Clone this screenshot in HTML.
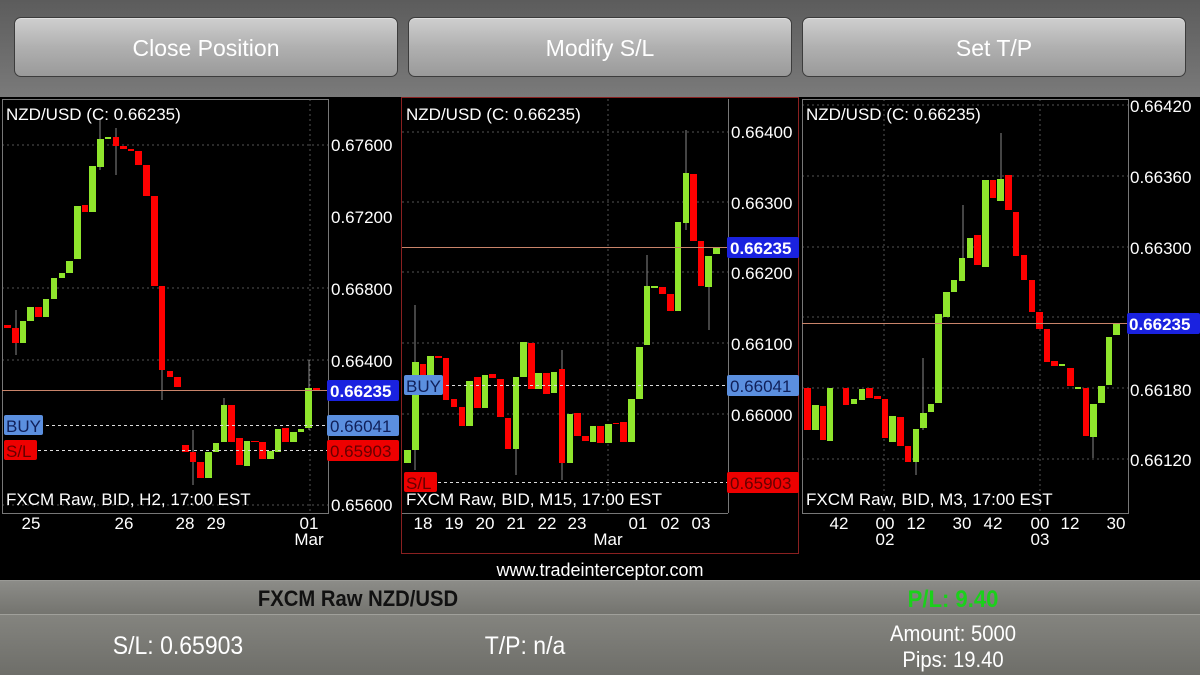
<!DOCTYPE html>
<html><head><meta charset="utf-8"><style>
*{margin:0;padding:0;box-sizing:border-box}
body{width:1200px;height:675px;overflow:hidden;background:#000;font-family:"Liberation Sans",sans-serif;position:relative}
.top{position:absolute;left:0;top:0;width:1200px;height:97px;background:linear-gradient(#5c5c5c,#7a7a7a)}
.btn{position:absolute;top:17px;height:60px;border:1px solid #3c3c3c;border-radius:7px;background:linear-gradient(#cfcfcf,#b0b0b0 50%,#9a9a9a);color:#fff;font-size:23px;text-align:center;line-height:60px;box-shadow:inset 0 1px 0 #e0e0e0}
.bar1{position:absolute;left:0;top:580px;width:1200px;height:34px;background:linear-gradient(#8c8c88,#74746f);border-top:1px solid #9a9a96}
.bar2{position:absolute;left:0;top:614px;width:1200px;height:61px;background:linear-gradient(#84847f,#6e6e69);border-top:1px solid #a0a09b}
.t{position:absolute;white-space:nowrap;transform-origin:center;transform:scaleX(.92)}
</style></head><body>
<div class="top"></div>
<div class="btn" style="left:14px;width:384px">Close Position</div>
<div class="btn" style="left:408px;width:384px">Modify S/L</div>
<div class="btn" style="left:802px;width:384px">Set T/P</div>

<svg style="position:absolute;left:0;top:97px" width="1200" height="483" viewBox="0 97 1200 483" font-family="Liberation Sans, sans-serif">
<g stroke="#555" stroke-dasharray="2,3" stroke-width="1">
<line x1="2" x2="328" y1="145" y2="145"/><line x1="2" x2="328" y1="288" y2="288"/><line x1="2" x2="328" y1="360" y2="360"/><line x1="2" x2="328" y1="505" y2="505"/><line x1="310" x2="310" y1="99" y2="513"/>
<line x1="402" x2="728" y1="132" y2="132"/><line x1="402" x2="728" y1="202" y2="202"/><line x1="402" x2="728" y1="272" y2="272"/><line x1="402" x2="728" y1="343" y2="343"/><line x1="402" x2="728" y1="414" y2="414"/><line x1="608" x2="608" y1="99" y2="513"/>
<line x1="802" x2="1128" y1="105" y2="105"/><line x1="802" x2="1128" y1="176" y2="176"/><line x1="802" x2="1128" y1="247" y2="247"/><line x1="802" x2="1128" y1="317" y2="317"/><line x1="802" x2="1128" y1="388" y2="388"/><line x1="802" x2="1128" y1="459" y2="459"/><line x1="884" x2="884" y1="99" y2="513"/><line x1="1040" x2="1040" y1="99" y2="513"/>
</g>
<g fill="none" stroke="#777"><rect x="2.5" y="99.5" width="326" height="414"/><rect x="802.5" y="99.5" width="326" height="414"/><line x1="728.5" x2="728.5" y1="99" y2="513"/><line x1="401" x2="728" y1="513.5" y2="513.5"/></g>
<rect x="401.5" y="97.5" width="397" height="456" fill="none" stroke="#8a2020"/>
<g stroke="#888" stroke-width="1">
<line x1="100" x2="100" y1="120" y2="170"/><line x1="116" x2="116" y1="128" y2="175"/><line x1="162" x2="162" y1="300" y2="400"/><line x1="193" x2="193" y1="430" y2="485"/><line x1="224" x2="224" y1="398" y2="440"/><line x1="309" x2="309" y1="360" y2="430"/><line x1="16" x2="16" y1="310" y2="355"/>
<line x1="415" x2="415" y1="305" y2="470"/><line x1="686" x2="686" y1="130" y2="230"/><line x1="709" x2="709" y1="280" y2="330"/><line x1="562" x2="562" y1="350" y2="480"/><line x1="516" x2="516" y1="420" y2="475"/><line x1="647" x2="647" y1="255" y2="340"/>
<line x1="1001" x2="1001" y1="133" y2="200"/><line x1="923" x2="923" y1="358" y2="430"/><line x1="1093" x2="1093" y1="430" y2="458"/><line x1="916" x2="916" y1="435" y2="475"/><line x1="963" x2="963" y1="205" y2="260"/>
</g>
<g fill="#f00">
<rect x="4" y="325" width="7" height="3"/><rect x="12" y="328" width="7" height="15"/><rect x="35" y="307" width="7" height="10"/><rect x="82" y="205" width="6" height="7"/><rect x="113" y="137" width="6" height="9"/><rect x="120" y="146" width="7" height="3"/><rect x="128" y="149" width="6" height="2"/><rect x="135" y="151" width="7" height="14"/><rect x="143" y="165" width="7" height="31"/><rect x="151" y="196" width="7" height="90"/><rect x="159" y="286" width="6" height="84"/><rect x="167" y="371" width="6" height="6"/><rect x="174" y="377" width="7" height="10"/><rect x="182" y="445" width="7" height="7"/><rect x="190" y="452" width="6" height="10"/><rect x="197" y="462" width="7" height="16"/><rect x="228" y="405" width="7" height="37"/><rect x="236" y="438" width="7" height="27"/><rect x="251" y="441" width="8" height="1"/><rect x="259" y="442" width="7" height="17"/><rect x="282" y="428" width="7" height="14"/><rect x="313" y="388" width="7" height="2"/>
<rect x="420" y="364" width="6" height="11"/><rect x="435" y="356" width="7" height="2"/><rect x="443" y="358" width="6" height="42"/><rect x="451" y="399" width="6" height="8"/><rect x="459" y="407" width="6" height="19"/><rect x="474" y="377" width="7" height="31"/><rect x="489" y="374" width="7" height="4"/><rect x="497" y="379" width="7" height="38"/><rect x="505" y="418" width="6" height="31"/><rect x="528" y="343" width="7" height="46"/><rect x="543" y="373" width="7" height="21"/><rect x="559" y="369" width="6" height="94"/><rect x="574" y="413" width="7" height="23"/><rect x="582" y="436" width="7" height="5"/><rect x="597" y="426" width="7" height="17"/><rect x="613" y="423" width="6" height="1"/><rect x="620" y="422" width="7" height="20"/><rect x="659" y="287" width="7" height="7"/><rect x="667" y="294" width="7" height="17"/><rect x="690" y="174" width="7" height="67"/><rect x="698" y="241" width="6" height="45"/>
<rect x="804" y="388" width="7" height="42"/><rect x="820" y="406" width="6" height="34"/><rect x="843" y="388" width="6" height="17"/><rect x="866" y="388" width="7" height="10"/><rect x="874" y="396" width="7" height="3"/><rect x="882" y="399" width="6" height="39"/><rect x="897" y="417" width="7" height="29"/><rect x="905" y="446" width="6" height="16"/><rect x="974" y="235" width="7" height="30"/><rect x="990" y="180" width="6" height="18"/><rect x="1005" y="175" width="7" height="35"/><rect x="1013" y="212" width="6" height="44"/><rect x="1021" y="255" width="6" height="25"/><rect x="1029" y="280" width="6" height="32"/><rect x="1036" y="312" width="7" height="17"/><rect x="1044" y="329" width="6" height="33"/><rect x="1051" y="361" width="7" height="5"/><rect x="1067" y="368" width="7" height="18"/><rect x="1083" y="388" width="6" height="48"/>
</g>
<g fill="#8fe52c">
<rect x="20" y="321" width="6" height="22"/><rect x="27" y="307" width="7" height="14"/><rect x="43" y="299" width="6" height="18"/><rect x="51" y="278" width="6" height="21"/><rect x="59" y="273" width="6" height="5"/><rect x="66" y="261" width="7" height="12"/><rect x="74" y="206" width="7" height="53"/><rect x="89" y="166" width="7" height="46"/><rect x="97" y="139" width="7" height="28"/><rect x="105" y="137" width="6" height="2"/><rect x="205" y="452" width="7" height="26"/><rect x="213" y="443" width="6" height="9"/><rect x="221" y="405" width="6" height="37"/><rect x="244" y="441" width="6" height="25"/><rect x="267" y="451" width="7" height="8"/><rect x="275" y="429" width="6" height="23"/><rect x="290" y="432" width="7" height="10"/><rect x="298" y="429" width="6" height="3"/><rect x="305" y="388" width="7" height="40"/>
<rect x="404" y="450" width="7" height="13"/><rect x="412" y="362" width="7" height="88"/><rect x="427" y="356" width="7" height="19"/><rect x="466" y="381" width="7" height="45"/><rect x="482" y="375" width="6" height="33"/><rect x="513" y="377" width="6" height="72"/><rect x="520" y="342" width="7" height="35"/><rect x="535" y="373" width="7" height="16"/><rect x="551" y="372" width="6" height="21"/><rect x="567" y="414" width="6" height="49"/><rect x="590" y="426" width="6" height="16"/><rect x="605" y="424" width="7" height="19"/><rect x="628" y="399" width="7" height="43"/><rect x="636" y="347" width="7" height="52"/><rect x="644" y="286" width="6" height="59"/><rect x="651" y="286" width="7" height="2"/><rect x="675" y="222" width="6" height="89"/><rect x="683" y="173" width="6" height="50"/><rect x="705" y="256" width="7" height="31"/><rect x="713" y="248" width="7" height="6"/>
<rect x="812" y="405" width="7" height="25"/><rect x="827" y="388" width="6" height="53"/><rect x="851" y="399" width="6" height="5"/><rect x="859" y="389" width="6" height="11"/><rect x="889" y="416" width="7" height="26"/><rect x="913" y="429" width="6" height="33"/><rect x="920" y="413" width="7" height="15"/><rect x="928" y="404" width="6" height="8"/><rect x="935" y="314" width="7" height="89"/><rect x="943" y="292" width="7" height="25"/><rect x="951" y="280" width="6" height="12"/><rect x="959" y="258" width="6" height="23"/><rect x="967" y="238" width="6" height="20"/><rect x="982" y="180" width="7" height="87"/><rect x="997" y="179" width="7" height="22"/><rect x="1059" y="364" width="6" height="2"/><rect x="1075" y="387" width="6" height="2"/><rect x="1090" y="404" width="7" height="33"/><rect x="1098" y="386" width="7" height="17"/><rect x="1106" y="337" width="6" height="48"/><rect x="1113" y="323" width="7" height="12"/>
</g>
<g stroke="#c9846a" stroke-width="1"><line x1="2" x2="328" y1="390.5" y2="390.5"/><line x1="402" x2="728" y1="247.5" y2="247.5"/><line x1="802" x2="1128" y1="323.5" y2="323.5"/></g>
<g stroke="#ddd" stroke-dasharray="3,3"><line x1="40" x2="328" y1="425.5" y2="425.5"/><line x1="38" x2="328" y1="450.5" y2="450.5"/><line x1="440" x2="728" y1="385.5" y2="385.5"/><line x1="438" x2="728" y1="482.5" y2="482.5"/></g>
<rect x="4" y="415" width="39" height="20" fill="#5b8fdf" rx="2"/><text x="6" y="432" font-size="17" fill="#10205a">BUY</text>
<rect x="4" y="440" width="33" height="20" fill="#e00" rx="2"/><text x="6" y="457" font-size="17" fill="#600">S/L</text>
<rect x="404" y="375" width="39" height="20" fill="#5b8fdf" rx="2"/><text x="406" y="392" font-size="17" fill="#10205a">BUY</text>
<rect x="404" y="472" width="33" height="20" fill="#e00" rx="2"/><text x="406" y="489" font-size="17" fill="#600">S/L</text>
<rect x="327" y="380" width="72" height="21" fill="#1a22e0" rx="2"/><text x="330" y="397" font-size="17" font-weight="bold" fill="#fff">0.66235</text>
<rect x="327" y="415" width="72" height="21" fill="#5b8fdf" rx="2"/><text x="330" y="432" font-size="17" fill="#10205a">0.66041</text>
<rect x="327" y="440" width="72" height="21" fill="#e00" rx="2"/><text x="330" y="457" font-size="17" fill="#600">0.65903</text>
<rect x="727" y="237" width="72" height="21" fill="#1a22e0" rx="2"/><text x="730" y="254" font-size="17" font-weight="bold" fill="#fff">0.66235</text>
<rect x="727" y="375" width="72" height="21" fill="#5b8fdf" rx="2"/><text x="730" y="392" font-size="17" fill="#10205a">0.66041</text>
<rect x="727" y="472" width="72" height="21" fill="#e00" rx="2"/><text x="730" y="489" font-size="17" fill="#600">0.65903</text>
<rect x="1127" y="313" width="73" height="21" fill="#1a22e0" rx="2"/><text x="1129" y="330" font-size="17" font-weight="bold" fill="#fff">0.66235</text>
<g fill="#fff" font-size="17">
<text x="6" y="120">NZD/USD (C: 0.66235)</text><text x="406" y="120">NZD/USD (C: 0.66235)</text><text x="806" y="120">NZD/USD (C: 0.66235)</text>
<text x="6" y="505">FXCM Raw, BID, H2, 17:00 EST</text><text x="406" y="505">FXCM Raw, BID, M15, 17:00 EST</text><text x="806" y="505">FXCM Raw, BID, M3, 17:00 EST</text>
<text x="331" y="151">0.67600</text><text x="331" y="223">0.67200</text><text x="331" y="295">0.66800</text><text x="331" y="367">0.66400</text><text x="331" y="511">0.65600</text>
<text x="731" y="138">0.66400</text><text x="731" y="209">0.66300</text><text x="731" y="279">0.66200</text><text x="731" y="350">0.66100</text><text x="731" y="421">0.66000</text>
<text x="1130" y="112">0.66420</text><text x="1130" y="183">0.66360</text><text x="1130" y="254">0.66300</text><text x="1130" y="396">0.66180</text><text x="1130" y="466">0.66120</text>
<g text-anchor="middle">
<text x="31" y="529">25</text><text x="124" y="529">26</text><text x="185" y="529">28</text><text x="216" y="529">29</text><text x="309" y="529">01</text><text x="309" y="545">Mar</text>
<text x="423" y="529">18</text><text x="454" y="529">19</text><text x="485" y="529">20</text><text x="516" y="529">21</text><text x="547" y="529">22</text><text x="577" y="529">23</text><text x="638" y="529">01</text><text x="670" y="529">02</text><text x="701" y="529">03</text><text x="608" y="545">Mar</text>
<text x="839" y="529">42</text><text x="885" y="529">00</text><text x="885" y="545">02</text><text x="916" y="529">12</text><text x="962" y="529">30</text><text x="993" y="529">42</text><text x="1040" y="529">00</text><text x="1040" y="545">03</text><text x="1070" y="529">12</text><text x="1116" y="529">30</text>
</g>
<text x="600" y="576" text-anchor="middle" font-size="18">www.tradeinterceptor.com</text>
</g>
</svg>

<div class="bar1"></div>
<div class="bar2"></div>
<div class="t" style="left:218px;top:586px;width:280px;text-align:center;font-size:22px;font-weight:bold;color:#111">FXCM Raw NZD/USD</div>
<div class="t" style="left:873px;top:586px;width:160px;text-align:center;font-size:24px;font-weight:bold;color:#1bd01b">P/L: 9.40</div>
<div class="t" style="left:78px;top:632px;width:200px;text-align:center;font-size:25px;color:#fff">S/L: 0.65903</div>
<div class="t" style="left:450px;top:632px;width:150px;text-align:center;font-size:25px;color:#fff">T/P: n/a</div>
<div class="t" style="left:863px;top:621px;width:180px;text-align:center;font-size:22px;color:#fff">Amount: 5000</div>
<div class="t" style="left:863px;top:647px;width:180px;text-align:center;font-size:22px;color:#fff">Pips: 19.40</div>
</body></html>
